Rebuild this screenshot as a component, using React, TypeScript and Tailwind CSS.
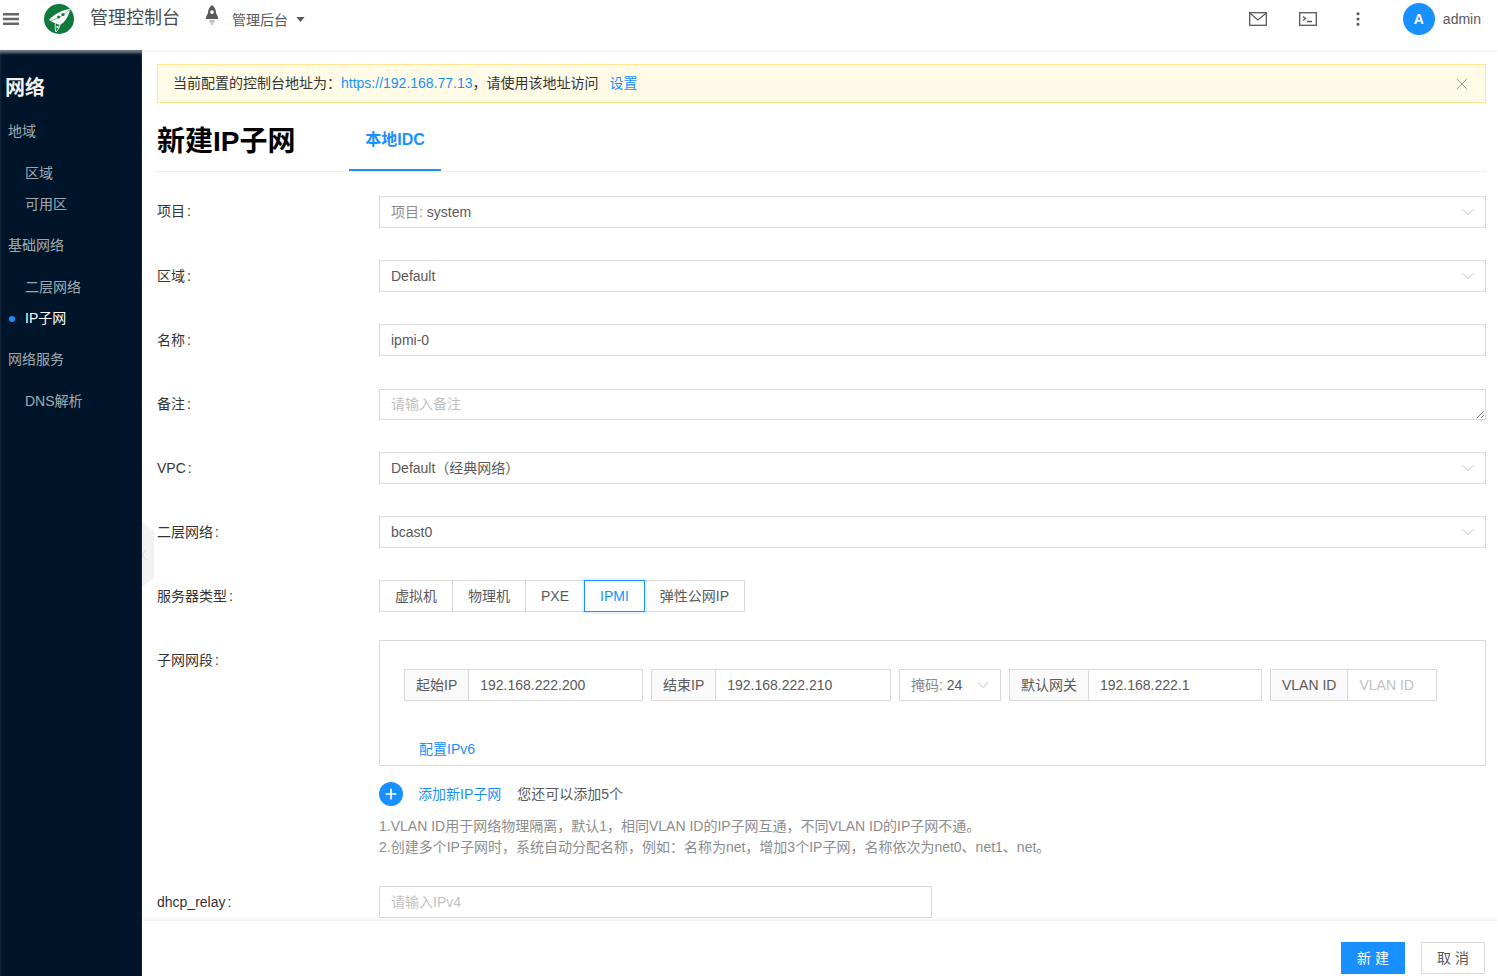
import React from 'react';
import { ChevronDown, ChevronLeft, MoreVertical, Plus, X } from 'lucide-react';

const fontStack = "font-['Liberation_Sans','Noto_Sans_CJK_SC',sans-serif]";

const FormRow = ({
  label,
  children,
  className = 'mb-[32px]',
  labelClass = 'pt-[6px]',
}: {
  label: string;
  children: React.ReactNode;
  className?: string;
  labelClass?: string;
}) => (
  <div className={`flex items-start ${className}`}>
    <div className={`w-[222px] shrink-0 text-[14px] leading-[20px] text-[#333] ${labelClass}`}>
      {label}
      <span className="ml-[2px]">:</span>
    </div>
    <div className="min-w-0 flex-1">{children}</div>
  </div>
);

const SelectBox = ({ children }: { children: React.ReactNode }) => (
  <div className="flex h-[32px] items-center justify-between border border-[#d9d9d9] bg-white pl-[11px] pr-[7px] text-[14px] text-[#595959]">
    <span>{children}</span>
    <ChevronDown className="h-[20px] w-[20px] text-[#bfbfbf]" strokeWidth={1.2} />
  </div>
);

const TextBox = ({ children, muted }: { children: React.ReactNode; muted?: boolean }) => (
  <div className={`flex h-[32px] items-center border border-[#d9d9d9] bg-white px-[11px] text-[14px] ${muted ? 'text-[#bfbfbf]' : 'text-[#595959]'}`}>
    {children}
  </div>
);

const AddonInput = ({ addon, value, width, muted }: { addon: string; value: string; width: string; muted?: boolean }) => (
  <div className={`flex h-[32px] shrink-0 border border-[#d9d9d9] text-[14px] ${width}`}>
    <div className="flex items-center whitespace-nowrap border-r border-[#d9d9d9] bg-[#fafafa] px-[11px] text-[#595959]">{addon}</div>
    <div className={`flex flex-1 items-center px-[11px] ${muted ? 'text-[#bfbfbf]' : 'text-[#595959]'}`}>{value}</div>
  </div>
);

const SideGroup = ({ title, items }: { title: string; items: { name: string; active?: boolean }[] }) => (
  <div>
    <div className="flex h-[31px] items-center pl-[8px] text-[14px] text-[#ffffffa6]">{title}</div>
    <div className="mb-[10px] mt-[11px]">
      {items.map((item) => (
        <div
          key={item.name}
          className={`relative flex h-[31px] items-center pl-[25px] text-[14px] ${item.active ? 'text-white' : 'text-[#ffffffa6]'}`}
        >
          {item.active && <span className="absolute left-[9px] h-[6px] w-[6px] rounded-full bg-[#1890ff]" />}
          {item.name}
        </div>
      ))}
    </div>
  </div>
);

const App = () => {
  const serverTypes = ['虚拟机', '物理机', 'PXE', 'IPMI', '弹性公网IP'];

  return (
    <div className={`flex h-[976px] w-[1498px] flex-col overflow-hidden bg-white ${fontStack}`}>
      <header className="relative z-20 flex h-[50px] shrink-0 items-start bg-white shadow-[0_1px_4px_rgba(0,0,0,0.08)]">
        <svg viewBox="0 0 16 12" className="ml-[3px] mt-[13px] h-[12px] w-[16px]" fill="#666">
          <rect width="16" height="2.5" />
          <rect y="4.75" width="16" height="2.5" />
          <rect y="9.5" width="16" height="2.5" />
        </svg>
        <svg viewBox="0 0 30 30" className="ml-[25px] mt-[4px] h-[30px] w-[30px]">
          <circle cx="15" cy="15" r="15" fill="#0f7a3c" />
          <path d="M5 16 C10 10 18 6 26 5 C25 12 21 18 16 21 C12 20 8 18 5 16 Z" fill="#fff" />
          <path d="M16 21 C15 24 14 26 12 28 C11 25 11 22 11.5 19.5" fill="none" stroke="#fff" strokeWidth="0.9" />
          <circle cx="19" cy="10.5" r="1.6" fill="#0f7a3c" />
          <circle cx="14.5" cy="13" r="1.5" fill="#0f7a3c" />
          <circle cx="13.5" cy="23" r="1.2" fill="#fff" />
          <path d="M7 16.5 C13 15 20 11 25 6" fill="none" stroke="#0f7a3c" strokeWidth="0.6" />
        </svg>
        <div className="ml-[16px] mt-[5px] text-[18px] leading-[26px] text-[#4a4a4a]">管理控制台</div>
        <svg viewBox="0 0 14 20" className="ml-[25px] mt-[5px] h-[20px] w-[14px]" fill="#595959">
          <path
            fillRule="evenodd"
            d="M7 0 C10 2 11 5 11 8 L13 12 L13 14 L1 14 L1 12 L3 8 C3 5 4 2 7 0 Z M7 5.2 A1.9 1.9 0 1 0 7 9 A1.9 1.9 0 1 0 7 5.2 Z"
          />
          <path d="M4.6 15 h1.2 v2.5 h-1.2 z M6.4 15 h1.2 v5 h-1.2 z M8.2 15 h1.2 v2.5 h-1.2 z" opacity="0.55" />
        </svg>
        <div className="ml-[13px] mt-[10px] text-[14px] leading-[20px] text-[#595959]">管理后台</div>
        <svg viewBox="0 0 10 6" className="ml-[8px] mt-[17px] h-[5px] w-[9px]" fill="#595959">
          <path d="M0 0 H10 L5 6 Z" />
        </svg>
        <div className="ml-auto flex items-start">
          <svg viewBox="0 0 18 14" className="mt-[12px] h-[14px] w-[18px]" fill="none" stroke="#595959" strokeWidth="1.3">
            <rect x="0.7" y="0.7" width="16.6" height="12.6" />
            <path d="M0.7 0.9 L9 8 L17.3 0.9" />
          </svg>
          <svg viewBox="0 0 18 14" className="ml-[32px] mt-[12px] h-[14px] w-[18px]" fill="none" stroke="#595959" strokeWidth="1.3">
            <rect x="0.7" y="0.7" width="16.6" height="12.6" />
            <path d="M4 4.5 L6.5 6.5 L4 8.5 M8 9.5 H13" />
          </svg>
          <MoreVertical className="ml-[32px] mt-[10px] h-[18px] w-[18px] text-[#595959]" strokeWidth={2.2} />
          <div className="ml-[36px] mt-[3px] flex h-[32px] w-[32px] items-center justify-center rounded-full bg-[#1890ff] text-[14px] font-bold text-white">A</div>
          <div className="ml-[8px] mr-[17px] mt-[9px] text-[14px] leading-[20px] text-[#595959]">admin</div>
        </div>
      </header>

      <div className="flex min-h-0 flex-1">
        <aside className="z-10 w-[142px] shrink-0 bg-[#001529] shadow-[inset_0_4px_3px_-1px_rgba(255,255,255,0.45)]">
          <div className="pl-[5px] pt-[25px] text-[20px] font-bold leading-[26px] text-[#f0f0f0]">网络</div>
          <div className="mt-[15px]">
            <SideGroup title="地域" items={[{ name: '区域' }, { name: '可用区' }]} />
            <SideGroup title="基础网络" items={[{ name: '二层网络' }, { name: 'IP子网', active: true }]} />
            <SideGroup title="网络服务" items={[{ name: 'DNS解析' }]} />
          </div>
        </aside>

        <div className="relative flex min-w-0 flex-1 flex-col">
          <div className="absolute left-0 top-[472px] z-10 flex h-[65px] w-[12px] items-center overflow-hidden bg-[#f2f2f2] [clip-path:polygon(0_0,100%_14%,100%_86%,0_100%)]">
            <ChevronLeft className="-ml-[8px] h-[20px] w-[20px] shrink-0 text-[#d0d0d0]" strokeWidth={1} />
          </div>

          <main className="min-h-0 flex-1 overflow-hidden pl-[15px] pr-[12px] pt-[14px]">
            <div className="flex h-[39px] items-center justify-between border border-[#ffe58f] bg-[#fffbe6] pl-[15px] pr-[13px] text-[14px] text-[#333]">
              <div>
                当前配置的控制台地址为：
                <span className="text-[#1890ff]">https://192.168.77.13</span>
                ，请使用该地址访问
                <span className="ml-[11px] text-[#1890ff]">设置</span>
              </div>
              <X className="h-[20px] w-[20px] text-[#8c8c8c]" strokeWidth={1} />
            </div>

            <div className="mb-[25px] mt-[10px] flex h-[59px] items-stretch border-b border-[#f0f0f0]">
              <h1 className="w-[192px] pt-[11px] text-[28px] font-bold leading-[36px] text-black">新建IP子网</h1>
              <div className="flex w-[92px] items-center justify-center border-b-2 border-[#1890ff] pb-[3px] text-[16px] font-bold text-[#1890ff]">
                本地IDC
              </div>
            </div>

            <div className="-mt-px">
              <FormRow label="项目" labelClass="pt-[5px]">
                <SelectBox>
                  <span className="text-[#8c8c8c]">项目:</span> system
                </SelectBox>
              </FormRow>
            </div>
            <FormRow label="区域">
              <SelectBox>Default</SelectBox>
            </FormRow>
            <FormRow label="名称">
              <TextBox>ipmi-0</TextBox>
            </FormRow>
            <FormRow label="备注">
              <div className="relative flex h-[32px] items-end">
                <div className="flex h-[31px] w-full items-center border border-[#d9d9d9] bg-white px-[11px] text-[14px] text-[#bfbfbf]">请输入备注</div>
                <svg viewBox="0 0 8 8" className="absolute bottom-[2px] right-[2px] h-[8px] w-[8px]" stroke="#595959" strokeWidth="0.8">
                  <path d="M1 8 L8 1 M5 8 L8 5" />
                </svg>
              </div>
            </FormRow>
            <FormRow label="VPC">
              <SelectBox>Default（经典网络）</SelectBox>
            </FormRow>
            <FormRow label="二层网络">
              <SelectBox>bcast0</SelectBox>
            </FormRow>
            <FormRow label="服务器类型" className="mb-[28px]">
              <div className="flex h-[32px] text-[14px] text-[#595959]">
                {serverTypes.map((type, i) => {
                  const active = type === 'IPMI';
                  return (
                    <div
                      key={type}
                      className={`flex items-center border px-[15px] ${i > 0 ? '-ml-px' : ''} ${
                        active
                          ? 'relative z-10 border-[#1890ff] text-[#1890ff] shadow-[0_0_0_2px_rgba(24,144,255,0.1)]'
                          : 'border-[#d9d9d9]'
                      }`}
                    >
                      {type}
                    </div>
                  );
                })}
              </div>
            </FormRow>

            <FormRow label="子网网段" className="mb-[16px]" labelClass="pt-[10px]">
              <div className="h-[126px] border border-[#d9d9d9] pl-[24px] pt-[28px]">
                <div className="flex gap-[8px]">
                  <AddonInput addon="起始IP" value="192.168.222.200" width="w-[239px]" />
                  <AddonInput addon="结束IP" value="192.168.222.210" width="w-[240px]" />
                  <div className="flex h-[32px] w-[102px] items-center justify-between border border-[#d9d9d9] pl-[11px] pr-[7px] text-[14px] text-[#595959]">
                    <span>
                      <span className="text-[#8c8c8c]">掩码:</span> 24
                    </span>
                    <ChevronDown className="h-[20px] w-[20px] text-[#bfbfbf]" strokeWidth={1.2} />
                  </div>
                  <AddonInput addon="默认网关" value="192.168.222.1" width="w-[253px]" />
                  <AddonInput addon="VLAN ID" value="VLAN ID" width="w-[167px]" muted />
                </div>
                <div className="ml-[15px] mt-[38px] text-[14px] leading-[20px] text-[#1890ff]">配置IPv6</div>
              </div>
            </FormRow>

            <div className="ml-[222px]">
              <div className="flex h-[24px] items-center text-[14px]">
                <span className="flex h-[24px] w-[24px] items-center justify-center rounded-full bg-[#1890ff]">
                  <Plus className="h-[16px] w-[16px] text-white" strokeWidth={2.5} />
                </span>
                <span className="ml-[15px] text-[#1890ff]">添加新IP子网</span>
                <span className="ml-[16px] text-[#595959]">您还可以添加5个</span>
              </div>
              <div className="mt-[10px] text-[14px] leading-[21px] text-[#8c8c8c]">
                <div>1.VLAN ID用于网络物理隔离，默认1，相同VLAN ID的IP子网互通，不同VLAN ID的IP子网不通。</div>
                <div>2.创建多个IP子网时，系统自动分配名称，例如：名称为net，增加3个IP子网，名称依次为net0、net1、net。</div>
              </div>
            </div>

            <div className="mt-[28px]">
              <FormRow label="dhcp_relay" className="mb-0">
                <div className="w-[553px]">
                  <TextBox muted>请输入IPv4</TextBox>
                </div>
              </FormRow>
            </div>
          </main>

          <footer className="z-10 flex h-[55px] shrink-0 items-start justify-end gap-[16px] bg-white pr-[13px] pt-[21px] shadow-[0_-1px_4px_rgba(0,0,0,0.08)]">
            <button className="h-[32px] w-[64px] bg-[#1890ff] text-[14px] text-white">新 建</button>
            <button className="h-[32px] w-[64px] border border-[#d9d9d9] bg-white text-[14px] text-[#595959]">取 消</button>
          </footer>
        </div>
      </div>
    </div>
  );
};

export default App;
